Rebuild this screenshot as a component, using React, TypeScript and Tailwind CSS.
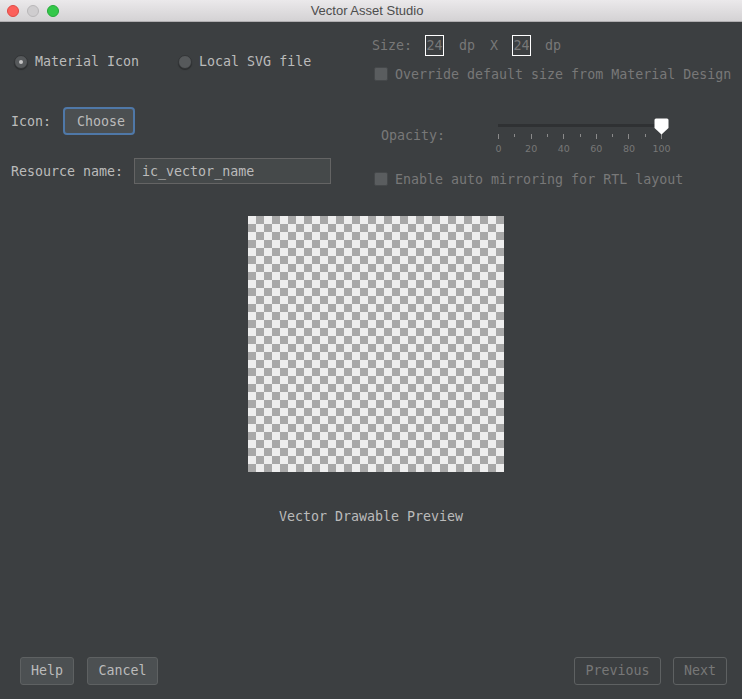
const mono = "font-['DejaVu_Sans_Mono','Liberation_Mono',monospace] text-[13.3px]";

function Radio({ checked }: { checked?: boolean }) {
  return (
    <span className="w-[14px] h-[14px] rounded-full bg-[#56595b] border border-[#333537] flex items-center justify-center shadow-[0_1px_1px_rgba(0,0,0,0.3)]">
      {checked && <span className="w-[4px] h-[4px] rounded-full bg-[#c4c4c4]" />}
    </span>
  );
}

function Checkbox() {
  return <span className="w-[14px] h-[14px] rounded-[2px] bg-[#5a5d5f] border border-[#45484a] shrink-0" />;
}

function Slider() {
  const majors = [0, 20, 40, 60, 80, 100];
  return (
    <div className="relative w-[175px] h-[40px]">
      <div className="absolute left-0 top-[5px] w-[163px] h-[3px] bg-[#2f3133]" />
      {Array.from({ length: 11 }).map((_, i) => (
        <div
          key={i}
          className="absolute top-[15px] w-px bg-[#8a8a8a]"
          style={{ left: i * 16.3, height: i % 2 === 0 ? 5 : 3 }}
        />
      ))}
      {majors.map((m, i) => (
        <span
          key={m}
          className="absolute top-[24px] -translate-x-1/2 font-['DejaVu_Sans',sans-serif] text-[9.5px] text-[#777] leading-[12px]"
          style={{ left: i * 32.6 + 0.5 }}
        >
          {m}
        </span>
      ))}
      <svg className="absolute left-[156px] top-[-1px]" width="15" height="17" viewBox="0 0 15 17">
        <path d="M2 0.5 H13 Q14.5 0.5 14.5 2 V10 L7.5 16.5 L0.5 10 V2 Q0.5 0.5 2 0.5 Z" fill="#ffffff" />
      </svg>
    </div>
  );
}

export default function App() {
  return (
    <div className={`w-[742px] h-[699px] bg-[#3c3f41] flex flex-col ${mono} text-[#bbbbbb]`}>
      <div className="h-[22px] shrink-0 bg-gradient-to-b from-[#ebe9eb] to-[#d4d2d4] border-b border-[#b0aeb0] flex items-center relative">
        <div className="flex items-center gap-[8px] pl-[7px]">
          <span className="w-[12px] h-[12px] rounded-full bg-[#fc605b] border border-[#de4a45]" />
          <span className="w-[12px] h-[12px] rounded-full bg-[#cfcdcf] border border-[#b9b7b9]" />
          <span className="w-[12px] h-[12px] rounded-full bg-[#34c84a] border border-[#26a93a]" />
        </div>
        <span className="flex-1 text-center pr-[67px] font-['Liberation_Sans',Arial,sans-serif] text-[13px] text-[#4d4d4d]">
          Vector Asset Studio
        </span>
      </div>

      <div className="flex h-[194px] shrink-0">
        <div className="w-[372px] flex flex-col pl-[11px]">
          <div className="flex items-center h-[20px] mt-[30px]">
            <span className="ml-[3px]"><Radio checked /></span>
            <span className="ml-[7px]">Material Icon</span>
            <span className="ml-[39px]"><Radio /></span>
            <span className="ml-[7px]">Local SVG file</span>
          </div>
          <div className="flex items-center h-[28px] mt-[35px]">
            <span className="pt-[1px]">Icon:</span>
            <button className="ml-[12px] w-[72px] h-[28px] rounded-[4px] bg-[#4b4f51] border-2 border-[#4f78a8] text-[#bbbbbb] pl-[4px] pt-[1px]">
              Choose
            </button>
          </div>
          <div className="flex items-center h-[26px] mt-[23px]">
            <span className="pt-[1px]">Resource name:</span>
            <div className="ml-[11px] w-[197px] h-[26px] bg-[#45494a] border border-[#646464] flex items-center pl-[7px] pt-[1px]">
              ic_vector_name
            </div>
          </div>
        </div>

        <div className="flex flex-col text-[#787878]">
          <div className="flex items-center h-[21px] mt-[13px]">
            <span>Size:</span>
            <span className="ml-[13px] w-[19px] h-[21px] border border-white flex items-center justify-center">24</span>
            <span className="ml-[15px]">dp</span>
            <span className="ml-[15px]">X</span>
            <span className="ml-[14px] w-[19px] h-[21px] border border-white flex items-center justify-center">24</span>
            <span className="ml-[14px]">dp</span>
          </div>
          <div className="flex items-center h-[14px] mt-[11px] pl-[2px]">
            <Checkbox />
            <span className="ml-[7px] pt-[1px]">Override default size from Material Design</span>
          </div>
          <div className="flex h-[42px] mt-[34px] pl-[9px]">
            <span className="mt-[13px] leading-[16px]">Opacity:</span>
            <div className="ml-[53px] mt-[4px]">
              <Slider />
            </div>
          </div>
          <div className="flex items-center h-[14px] mt-[15px] pl-[2px]">
            <Checkbox />
            <span className="ml-[7px] pt-[1px]">Enable auto mirroring for RTL layout</span>
          </div>
        </div>
      </div>

      <div className="ml-[248px] w-[256px] h-[256px] shrink-0 bg-[conic-gradient(#a8a8a8_25%,#eeeeee_0_50%,#a8a8a8_0_75%,#eeeeee_0)] bg-[length:16px_16px]" />

      <div className="mt-[37px] h-[16px] leading-[16px] pl-[279px]">Vector Drawable Preview</div>

      <div className="mt-auto flex items-center pb-[14px] px-[15px]">
        <button className="ml-[5px] w-[54px] h-[28px] rounded-[3px] bg-[#4c5052] border border-[#5e6162] text-[#bbbbbb]">
          Help
        </button>
        <button className="ml-[13px] w-[71px] h-[28px] rounded-[3px] bg-[#4c5052] border border-[#5e6162] text-[#bbbbbb]">
          Cancel
        </button>
        <div className="flex-1" />
        <button className="w-[87px] h-[28px] rounded-[3px] border border-[#5e6162] text-[#777]">
          Previous
        </button>
        <button className="ml-[12px] w-[54px] h-[28px] rounded-[3px] border border-[#5e6162] text-[#777]">
          Next
        </button>
      </div>
    </div>
  );
}
